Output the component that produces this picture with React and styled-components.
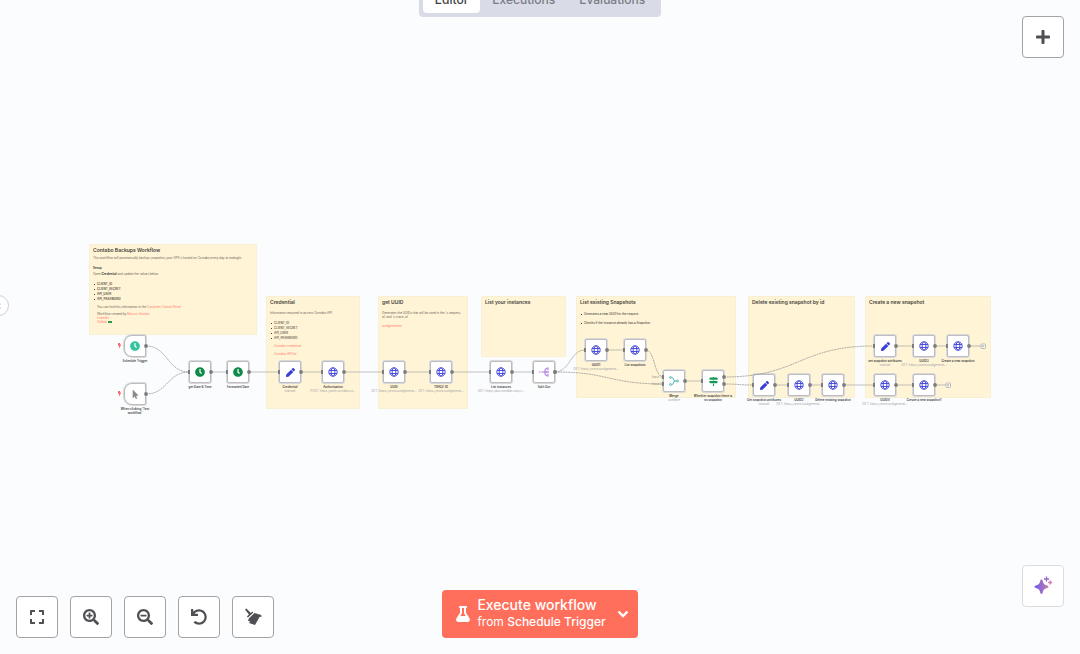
import React from 'react'
import styled, { createGlobalStyle } from 'styled-components'
import {
  FaBolt,
  FaChevronLeft,
  FaClock,
  FaExpand,
  FaFlask,
  FaMapSigns,
  FaMousePointer,
  FaPen,
  FaPlus,
  FaSearchMinus,
  FaSearchPlus,
  FaUndo,
} from 'react-icons/fa'

const notes = [
  {
    x: 89, y: 244, w: 168, h: 91, title: 'Contabo Backups Workflow',
    body: () => (
      <>
        <Para $top={3}>This workflow will automatically backup (snapshot) your VPS's hosted on Contabo every day at midnight.</Para>
        <Para $top={6}><b>Setup</b></Para>
        <Para $top={2}>Open <b>Credential</b> and update the values below</Para>
        <Bullets $top={6} $bold>
          <li>CLIENT_ID</li>
          <li>CLIENT_SECRET</li>
          <li>API_USER</li>
          <li>API_PASSWORD</li>
        </Bullets>
        <Para $top={3} $nested>You can find this information in the <a href="#panel">Customer Control Panel</a></Para>
        <Para $top={3} $nested>Workflow created by <a href="#author">Marcos Antonio</a></Para>
        <Para $top={0} $nested><a href="#linkedin">LinkedIn</a></Para>
        <Para $top={0} $nested><a href="#github">GitHub</a> <Flag /></Para>
      </>
    ),
  },
  {
    x: 266, y: 296, w: 94, h: 113, title: 'Credential',
    body: () => (
      <>
        <Para $top={6}>Information required to access Contabo API</Para>
        <Bullets $top={6}>
          <li>CLIENT_ID</li>
          <li>CLIENT_SECRET</li>
          <li>API_USER</li>
          <li>API_PASSWORD</li>
        </Bullets>
        <Para $top={3} $nested><a href="#credential">Contabo credential</a></Para>
        <Para $top={4} $nested><a href="#api">Contabo API list</a></Para>
      </>
    ),
  },
  {
    x: 378, y: 296, w: 90, h: 113, title: 'get UUID',
    body: () => (
      <>
        <Para $top={6}>Generates the UUIDs that will be used in the 'x-request-id' and 'x-trace-id'</Para>
        <Para $top={5}><a href="#uuid">uuidgenerator</a></Para>
      </>
    ),
  },
  { x: 481, y: 296, w: 85, h: 61, title: 'List your instances' },
  {
    x: 576, y: 296, w: 160, h: 102, title: 'List existing Snapshots',
    body: () => (
      <>
        <Bullets $top={7}><li>Generates a new UUID for the request</li></Bullets>
        <Bullets $top={4}><li>Checks if the instance already has a Snapshot</li></Bullets>
      </>
    ),
  },
  { x: 748, y: 296, w: 107, h: 102, title: 'Delete existing snapshot by id' },
  { x: 865, y: 296, w: 126, h: 102, title: 'Create a new snapshot' },
]

const UUID_URL = 'GET: https://www.uuidgenerat...'

const nodes = [
  { x: 135, y: 346, icon: 'schedule', title: 'Schedule Trigger', trigger: true },
  { x: 135, y: 394, icon: 'pointer', title: 'When clicking ‘Test workflow’', trigger: true },
  { x: 200, y: 372, icon: 'clock', title: 'get Date & Time' },
  { x: 238, y: 372, icon: 'clock', title: 'Formatted Date' },
  { x: 290, y: 372, icon: 'pen', title: 'Credential', sub: 'manual' },
  { x: 333, y: 372, icon: 'globe', title: 'Authorisation', sub: 'POST: https://auth.contabo.co...' },
  { x: 394, y: 372, icon: 'globe', title: 'UUID', sub: UUID_URL },
  { x: 441, y: 372, icon: 'globe', title: 'TRACE ID', sub: UUID_URL },
  { x: 501, y: 372, icon: 'globe', title: 'List instances', sub: 'GET: https://api.contabo.com/v...' },
  { x: 544, y: 372, icon: 'split', title: 'Split Out' },
  { x: 596, y: 350, icon: 'globe', title: 'UUID1', sub: UUID_URL },
  { x: 635, y: 350, icon: 'globe', title: 'List snapshots' },
  { x: 674, y: 381, icon: 'merge', title: 'Merge', sub: 'combine' },
  { x: 713, y: 381, icon: 'signs', title: 'Whether snapshot there is no snapshot' },
  { x: 764, y: 385, icon: 'pen', title: 'Get snapshot attributes', sub: 'manual' },
  { x: 799, y: 385, icon: 'globe', title: 'UUID2', sub: UUID_URL },
  { x: 833, y: 385, icon: 'globe', title: 'Delete existing snapshot' },
  { x: 885, y: 346, icon: 'pen', title: 'set snapshot attributes', sub: 'manual' },
  { x: 924, y: 346, icon: 'globe', title: 'UUID3', sub: UUID_URL },
  { x: 958, y: 346, icon: 'globe', title: 'Create a new snapshot' },
  { x: 885, y: 385, icon: 'globe', title: 'UUID4', sub: UUID_URL },
  { x: 924, y: 385, icon: 'globe', title: 'Create a new snapshot1' },
]

// [x1, y1, x2, y2, dashed]
const edges = [
  [146, 346, 189, 372, true],
  [146, 394, 189, 372, true],
  [211, 372, 227, 372],
  [249, 372, 279, 372],
  [301, 372, 322, 372],
  [344, 372, 383, 372],
  [405, 372, 430, 372],
  [452, 372, 490, 372],
  [512, 372, 533, 372],
  [555, 372, 585, 350, true],
  [555, 372, 663, 384, true],
  [607, 350, 624, 350],
  [646, 350, 663, 377, true],
  [685, 381, 702, 381],
  [724, 377, 874, 346, true],
  [724, 384, 753, 385, true],
  [775, 385, 788, 385],
  [810, 385, 822, 385],
  [844, 385, 874, 385],
  [896, 346, 913, 346],
  [935, 346, 947, 346],
  [896, 385, 913, 385],
]

const addPoints = [
  [969, 346, 983],
  [935, 385, 948],
]

const portLabels = [
  { x: 652, y: 375, text: 'Input 1' },
  { x: 652, y: 382, text: 'Input 2' },
]

function Globe() {
  return (
    <svg width="10" height="10" viewBox="0 0 20 20" fill="none" stroke="#3a3fd9" strokeWidth="1.8">
      <circle cx="10" cy="10" r="8.4" />
      <ellipse cx="10" cy="10" rx="3.8" ry="8.4" />
      <path d="M2.2 7h15.6M2.2 13h15.6" />
    </svg>
  )
}

function SplitOut() {
  return (
    <svg width="10" height="10" viewBox="0 0 20 20" fill="none" stroke="#a568d8" strokeWidth="1.8">
      <path d="M0 10h3M5 10h7M17 3h-2q-3 0-3 3v8q0 3 3 3h2M12 10h5" />
      <path d="M15.500 1.500h3.500v3.500h-3.500zM15.500 8.200h3.500v3.500h-3.500zM15.500 15h3.500v3.500h-3.500z" strokeWidth="1" />
    </svg>
  )
}

function Merge() {
  return (
    <svg width="10" height="10" viewBox="0 0 20 20" fill="none" stroke="#45b5b8" strokeWidth="2">
      <path d="M5 3h1q2 0 2.600 2.500Q9.500 10 12 10h3M5 17h1q2 0 2.600-2.500Q9.500 10 12 10" />
      <circle cx="3" cy="3" r="1.900" />
      <circle cx="3" cy="17" r="1.900" />
      <circle cx="17" cy="10" r="1.900" />
    </svg>
  )
}

function Broom() {
  return (
    <svg width="18" height="18" viewBox="0 0 18 18" fill="#4f4f54">
      <path d="M1 1.500l1.400-.9 4.400 4.300 1.600-1.500 1 1-5.400 5.200-1.100-1.100 2-1.900z" />
      <path d="M4.800 10.400l5.700-5.400 6.700 1.900.3 2.200-1.800-.3-4.700 8.200-5.900-2 1-1.800-2.100-.3z" />
    </svg>
  )
}

function Chevron() {
  return (
    <svg width="12" height="12" viewBox="0 0 12 12" fill="none" stroke="#fff" strokeWidth="2.400">
      <path d="M1.500 3.500l4.500 4.500 4.500-4.500" />
    </svg>
  )
}

function Sparkles() {
  return (
    <svg width="20" height="20" viewBox="0 0 20 20">
      <defs>
        <linearGradient id="sparkle" x1="0" y1="0" x2="1" y2="0">
          <stop offset="0" stopColor="#6b5be8" />
          <stop offset="1" stopColor="#c77fae" />
        </linearGradient>
      </defs>
      <path
        fill="url(#sparkle)"
        d="M8.500 3.500c.7 0 1 .5 1.200 1.300.7 3 1.500 3.900 4.600 4.700 1.600.4 1.600 2 0 2.400-3.100.8-3.900 1.700-4.600 4.800-.4 1.600-2 1.600-2.400 0-.7-3.100-1.500-4-4.600-4.800-1.600-.4-1.600-2 0-2.400 3.100-.8 3.900-1.700 4.600-4.700.2-.8.5-1.300 1.200-1.300z"
      />
      <path d="M13.500.5v5M11 3h5" stroke="#9b67cc" strokeWidth="1.300" />
      <path d="M17.200 4.500v4M15.200 6.500h4" stroke="#c77fae" strokeWidth="1.300" />
    </svg>
  )
}

const icons = {
  schedule: <FaClock size={10} color="#31c49f" />,
  clock: <FaClock size={10} color="#0f8a4a" />,
  pointer: <FaMousePointer size={9} color="#8b8b8b" />,
  pen: <FaPen size={9} color="#3a3fd9" />,
  signs: <FaMapSigns size={9} color="#159a55" />,
  globe: <Globe />,
  split: <SplitOut />,
  merge: <Merge />,
}

function edgePath([x1, y1, x2, y2]) {
  const mid = (x1 + x2) / 2
  return `M${x1} ${y1}C${mid} ${y1} ${mid} ${y2} ${x2} ${y2}`
}

function Edges() {
  return (
    <EdgeLayer>
      {edges.map((edge, i) => (
        <g key={i}>
          <path
            d={edgePath(edge)}
            fill="none"
            stroke={edge[4] ? '#8f8f8f' : '#a6a6a6'}
            strokeWidth=".7"
            strokeDasharray={edge[4] ? '2 .6' : undefined}
          />
          <circle cx={edge[0]} cy={edge[1]} r="1.900" fill="#7d7d80" />
          <rect x={edge[2] - 1} y={edge[3] - 2} width="2" height="4" fill="#7d7d80" />
        </g>
      ))}
      {addPoints.map(([x1, y, x2]) => (
        <g key={y} stroke="#a0a0a0" strokeWidth=".7" fill="none">
          <path d={`M${x1} ${y}H${x2 - 2}`} />
          <circle cx={x1} cy={y} r="1.900" fill="#7d7d80" stroke="none" />
          <rect x={x2 - 2} y={y - 2} width="4.500" height="4.500" rx=".8" fill="#fff" />
          <path d={`M${x2 - 1} ${y}h2.500M${x2} ${y - 1}v2.500`} />
        </g>
      ))}
    </EdgeLayer>
  )
}

function App() {
  return (
    <Page>
      <GlobalStyle />
      <Canvas>
        {notes.map((note) => (
          <Note key={note.title} $x={note.x} $y={note.y} $w={note.w} $h={note.h}>
            <h2>{note.title}</h2>
            {note.body && note.body()}
          </Note>
        ))}
        {nodes.map((node) => (
          <Node key={`${node.x}-${node.y}`} $x={node.x} $y={node.y}>
            <NodeBox $trigger={node.trigger}>{icons[node.icon]}</NodeBox>
            <NodeTitle $trigger={node.trigger}>{node.title}</NodeTitle>
            {node.sub && <NodeSub>{node.sub}</NodeSub>}
            {node.trigger && <Bolt><FaBolt size={5} color="#ff5a5a" /></Bolt>}
          </Node>
        ))}
        <Edges />
        {portLabels.map((label) => (
          <PortLabel key={label.text} $x={label.x} $y={label.y}>{label.text}</PortLabel>
        ))}
      </Canvas>
      <SideToggle aria-label="Expand sidebar"><FaChevronLeft size={6} /></SideToggle>

      <TopBar>
        <Tabs>
          <Tab $active>Editor</Tab>
          <Tab>Executions</Tab>
          <Tab>Evaluations</Tab>
        </Tabs>
        <Right>
          <IconButton aria-label="Add node"><FaPlus size={16} /></IconButton>
        </Right>
      </TopBar>

      <BottomBar>
        <Controls>
          <IconButton aria-label="Fit to view"><FaExpand size={16} /></IconButton>
          <IconButton aria-label="Zoom in"><FaSearchPlus size={16} /></IconButton>
          <IconButton aria-label="Zoom out"><FaSearchMinus size={16} /></IconButton>
          <IconButton aria-label="Reset zoom"><FaUndo size={16} /></IconButton>
          <IconButton aria-label="Tidy up"><Broom /></IconButton>
        </Controls>
        <Execute>
          <ExecuteMain>
            <FaFlask size={16} />
            <span>
              <strong>Execute workflow</strong>
              <small>from <em>Schedule Trigger</em></small>
            </span>
          </ExecuteMain>
          <ExecuteMenu aria-label="Choose trigger"><Chevron /></ExecuteMenu>
        </Execute>
        <Right $raised>
          <IconButton $light aria-label="Ask assistant"><Sparkles /></IconButton>
        </Right>
      </BottomBar>
    </Page>
  )
}

export default App

const GlobalStyle = createGlobalStyle`
* {
  box-sizing: border-box;
}
body {
  margin: 0;
  font-family: Inter, 'Liberation Sans', sans-serif;
}
button {
  font-family: inherit;
  padding: 0;
  cursor: pointer;
}
`

const Page = styled.div`
  position: relative;
  min-height: 100vh;
  display: flex;
  flex-direction: column;
  justify-content: space-between;
  overflow: hidden;
  background: #fbfcfe;
`

const Canvas = styled.main`
  position: absolute;
  inset: 0;
`

const Note = styled.section`
  position: absolute;
  left: ${(p) => p.$x}px;
  top: ${(p) => p.$y}px;
  width: ${(p) => p.$w}px;
  height: ${(p) => p.$h}px;
  padding: 2px 3px;
  background: #fff4d6;
  border: 1px solid #f8efd4;
  border-radius: 1px;
  color: #6a655a;
  font-size: 3px;
  line-height: 4px;
  h2 {
    margin: 0;
    color: #45423b;
    font-size: 5px;
    line-height: 6px;
    font-weight: 600;
  }
  b {
    color: #45423b;
  }
  a {
    color: #ff7a66;
    text-decoration: none;
  }
`

const Para = styled.p`
  margin: ${(p) => p.$top}px 0 0 ${(p) => (p.$nested ? 4 : 0)}px;
`

const Bullets = styled.ul`
  margin: ${(p) => p.$top}px 0 0;
  padding: 0 0 0 1px;
  list-style: none;
  line-height: 5px;
  color: #4f4b43;
  font-weight: ${(p) => (p.$bold ? 600 : 500)};
  li {
    display: flex;
    align-items: center;
    gap: 2px;
  }
  li::before {
    content: '';
    width: 1px;
    height: 1px;
    background: #45423b;
  }
`

const Flag = styled.span`
  display: inline-block;
  width: 4px;
  height: 2px;
  background: #2f9a4c;
`

const Node = styled.div`
  position: absolute;
  left: ${(p) => p.$x - 25}px;
  top: ${(p) => p.$y - 11}px;
  width: 50px;
  display: flex;
  flex-direction: column;
  align-items: center;
`

const NodeBox = styled.div`
  width: 22px;
  height: 22px;
  display: flex;
  align-items: center;
  justify-content: center;
  background: #fff;
  border: 1px solid #bdbdc0;
  border-radius: ${(p) => (p.$trigger ? '8px 2px 2px 8px' : '2px')};
  box-shadow: 0 0 0 1px #d9d9db;
`

const NodeTitle = styled.div`
  max-width: ${(p) => (p.$trigger ? 36 : 40)}px;
  margin-top: 2px;
  color: #3c3c40;
  font-size: 3px;
  line-height: 4px;
  font-weight: 600;
  text-align: center;
`

const NodeSub = styled.div`
  color: #a3a3a6;
  font-size: 3px;
  line-height: 4px;
  white-space: nowrap;
`

const Bolt = styled.span`
  position: absolute;
  left: 7px;
  top: 8px;
  display: flex;
`

const PortLabel = styled.span`
  position: absolute;
  left: ${(p) => p.$x}px;
  top: ${(p) => p.$y}px;
  color: #8f8f92;
  font-size: 3px;
  line-height: 4px;
`

const EdgeLayer = styled.svg`
  position: absolute;
  inset: 0;
  width: 100%;
  height: 100%;
`

const SideToggle = styled.button`
  position: absolute;
  left: -12px;
  top: 295px;
  width: 21px;
  height: 21px;
  display: flex;
  align-items: center;
  justify-content: center;
  background: #fff;
  border: 1px solid #cfcfd4;
  border-radius: 50%;
  color: #77777c;
`

const TopBar = styled.header`
  position: relative;
  display: grid;
  grid-template-columns: 1fr auto 1fr;
  align-items: start;
  padding: 0 16px;
`

const Tabs = styled.nav`
  grid-column: 2;
  display: flex;
  margin-top: -17px;
  padding: 4px;
  background: #d9dce6;
  border-radius: 4px;
`

const Tab = styled.button`
  height: 26px;
  padding: 0 12px 2px;
  border: 0;
  border-radius: 4px;
  background: ${(p) => (p.$active ? '#fff' : 'transparent')};
  color: ${(p) => (p.$active ? '#414244' : '#7b7d86')};
  font-size: 12px;
  font-weight: 500;
`

const Right = styled.div`
  grid-column: 3;
  justify-self: end;
  margin: ${(p) => (p.$raised ? '0 0 31px' : '16px 0 0')};
`

const IconButton = styled.button`
  width: 42px;
  height: 42px;
  display: flex;
  align-items: center;
  justify-content: center;
  background: #fff;
  border: 1px solid ${(p) => (p.$light ? '#dcdce0' : '#a3a3a6')};
  border-radius: 4px;
  color: #4f4f54;
`

const BottomBar = styled.footer`
  position: relative;
  display: grid;
  grid-template-columns: 1fr auto 1fr;
  align-items: end;
  padding: 0 16px 16px;
`

const Controls = styled.div`
  display: flex;
  gap: 12px;
`

const Execute = styled.div`
  display: flex;
  height: 48px;
  background: #ff6f5c;
  border-radius: 4px;
  color: #fff;
`

const ExecuteMain = styled.button`
  display: flex;
  align-items: center;
  gap: 6px;
  padding-left: 13px;
  background: none;
  border: 0;
  color: inherit;
  text-align: left;
  span {
    display: flex;
    flex-direction: column;
    padding-bottom: 2px;
  }
  strong {
    font-size: 14px;
    line-height: 17px;
    font-weight: 500;
  }
  small {
    font-size: 12px;
    line-height: 17px;
  }
  em {
    font-style: normal;
    font-weight: 500;
  }
`

const ExecuteMenu = styled.button`
  width: 32px;
  display: flex;
  align-items: center;
  justify-content: center;
  padding-left: 2px;
  background: none;
  border: 0;
  color: inherit;
`
